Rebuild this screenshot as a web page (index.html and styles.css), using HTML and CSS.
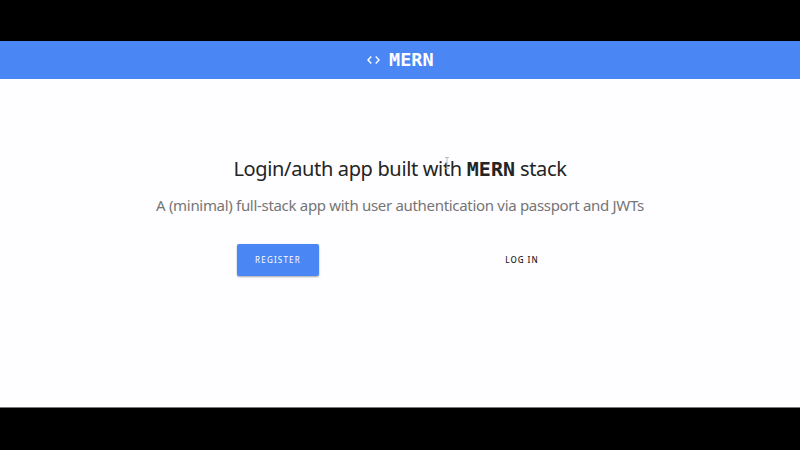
FILE: index.html
```html
<!DOCTYPE html>
<html lang="en">
<head>
<meta charset="utf-8">
<title>MERN</title>
<link rel="stylesheet" href="styles.css">
</head>
<body>
<div class="page">
<nav class="navbar">
<svg class="code-icon" viewBox="0 0 13 8"><path d="M4.3 .6 1 4 4.3 7.4M8.7 .6 12 4 8.7 7.4"/></svg>
<span class="brand">MERN</span>
</nav>
<main class="landing">
<h1 class="title"><span>Login/auth app built with</span><b>MERN</b><span>stack</span></h1>
<p class="subtitle">A (minimal) full-stack app with user authentication via passport and JWTs</p>
<div class="actions">
<a class="btn btn-primary">REGISTER</a>
<a class="btn btn-flat">LOG IN</a>
</div>
</main>
<svg class="cursor" viewBox="0 0 6 12"><path d="M1 .5H5M3 .5V11.5M1 11.5H5"/></svg>
</div>
</body>
</html>
```
FILE: styles.css
```css
* { box-sizing: border-box; }
body {
  margin: 0;
  height: 450px;
  padding: 41px 0 42px;
  background: #000;
  font-family: "Noto Sans", sans-serif;
  overflow: hidden;
}
.page {
  position: relative;
  height: 367px;
  background: #fefdff;
  border-bottom: 1px solid #777;
}
.navbar {
  display: flex;
  align-items: center;
  height: 38px;
  padding-left: 367px;
  gap: 9px;
  background: #4a86f4;
  color: #fff;
}
.code-icon {
  width: 13px;
  height: 8px;
  fill: none;
  stroke: #fff;
  stroke-width: 1.4;
}
.brand {
  font: bold 18.5px/38px "DejaVu Sans Mono", monospace;
}
.landing {
  padding-top: 74px;
}
.title {
  display: flex;
  justify-content: center;
  align-items: baseline;
  gap: 5px;
  margin: 0;
  font-size: 20px;
  line-height: 32px;
  font-weight: 400;
  color: #242424;
  white-space: nowrap;
  letter-spacing: -0.35px;
}
.title b {
  font: bold 20px/32px "DejaVu Sans Mono", monospace;
  letter-spacing: 0;
}
.subtitle {
  margin: 8px 0 0;
  text-align: center;
  font-size: 15px;
  line-height: 24px;
  color: #757575;
  white-space: nowrap;
  letter-spacing: -0.31px;
}
.actions {
  display: flex;
  align-items: center;
  padding-left: 237px;
  margin-top: 27px;
  gap: 168px;
}
.btn {
  height: 32px;
  font-size: 8px;
  line-height: 32px;
  letter-spacing: 1.2px;
  text-align: center;
  white-space: nowrap;
}
.btn-primary {
  width: 82px;
  border-radius: 2px;
  background: #4a86f4;
  color: #fff;
  box-shadow: 0 1px 2px rgba(0, 0, 0, .35);
}
.btn-flat {
  width: 70px;
  color: #222;
  font-weight: 500;
  letter-spacing: 1px;
}
.cursor {
  position: absolute;
  left: 444px;
  top: 116px;
  width: 6px;
  height: 12px;
  fill: none;
  stroke: #aaa;
  stroke-width: .8;
}
```
